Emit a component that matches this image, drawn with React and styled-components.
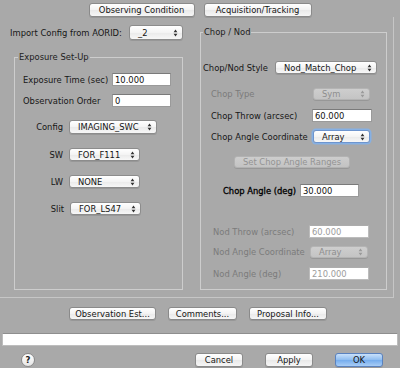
import React from "react";
import styled, { createGlobalStyle } from "styled-components";

const Global = createGlobalStyle`
  html, body { margin: 0; padding: 0; background: #a9a9a9; }
  #root { width: 400px; height: 368px; overflow: hidden; }
`;

const Window = styled.div`
  box-sizing: border-box;
  width: 400px;
  height: 368px;
  padding-top: 3px;
  background: #a9a9a9;
  font-family: "DejaVu Sans", "Liberation Sans", sans-serif;
  font-size: 8.4px;
  line-height: 10px;
  color: #161616;
  display: flex;
  flex-direction: column;
`;

const TabBar = styled.div`
  display: flex;
  justify-content: center;
  gap: 9px;
  height: 14px;
`;

const Button = styled.div`
  box-sizing: border-box;
  width: ${(p) => p.$w}px;
  height: ${(p) => p.$h || 14}px;
  display: flex;
  align-items: center;
  justify-content: center;
  border-radius: 3px;
  border: 1px solid ${(p) => (p.$primary ? "#5a82bf" : p.$disabled ? "#b2b2b2" : "#8a8a8a")};
  background: ${(p) =>
    p.$primary
      ? "linear-gradient(#c9e1fb, #8dbcf0 50%, #74acee 51%, #a8cdf6)"
      : p.$disabled
      ? "linear-gradient(#cdcdcd, #c3c3c3)"
      : "linear-gradient(#ffffff, #f3f3f3 50%, #e9e9e9 51%, #f6f6f6)"};
  color: ${(p) => (p.$disabled ? "#939393" : "#151515")};
  box-shadow: 0 1px 0 rgba(0, 0, 0, 0.1);
  white-space: nowrap;
`;

const Panel = styled.div`
  box-sizing: border-box;
  width: 394px;
  height: 281px;
  border-right: 1px solid #c6c6c6;
  border-bottom: 1px solid #c6c6c6;
  display: flex;
  align-items: flex-start;
`;

const LeftCol = styled.div`
  width: 173px;
  margin-left: 10px;
  padding-top: 8px;
  display: flex;
  flex-direction: column;
`;

const ImportRow = styled.div`
  display: flex;
  align-items: center;
  height: 15px;
  justify-content: space-between;
`;

const GroupBox = styled.div`
  box-sizing: border-box;
  width: ${(p) => p.$w}px;
  height: ${(p) => p.$h}px;
  margin-top: ${(p) => p.$mt}px;
  margin-left: ${(p) => p.$ml}px;
  border: 1px solid #cdcdcd;
  display: flex;
  flex-direction: column;
`;

const GroupTitle = styled.div`
  align-self: flex-start;
  margin-top: -6px;
  margin-left: ${(p) => p.$ml}px;
  padding: 0 1px;
  height: 10px;
  background: #a9a9a9;
  color: #1c1c1c;
`;

const Row = styled.div`
  display: flex;
  align-items: center;
  height: ${(p) => p.$h || 13}px;
  margin-top: ${(p) => p.$mt}px;
  padding-left: ${(p) => p.$pl || 0}px;
`;

const Label = styled.span`
  box-sizing: border-box;
  width: ${(p) => p.$w}px;
  flex: none;
  text-align: ${(p) => (p.$right ? "right" : "left")};
  padding-right: ${(p) => (p.$right ? 6 : 0)}px;
  color: ${(p) => (p.$disabled ? "#7b7b7b" : p.$bold ? "#000" : "#161616")};
  -webkit-text-stroke: ${(p) => (p.$bold ? "0.3px #000" : "0")};
  white-space: nowrap;
`;

const Field = styled.div`
  box-sizing: border-box;
  width: ${(p) => p.$w}px;
  height: ${(p) => p.$h || 13}px;
  padding-left: 2px;
  display: flex;
  align-items: center;
  background: #ffffff;
  border: 1px solid ${(p) => (p.$disabled ? "#bcbcbc" : "#9a9a9a")};
  border-top-color: ${(p) => (p.$disabled ? "#acacac" : "#7a7a7a")};
  color: ${(p) => (p.$disabled ? "#9c9c9c" : "#111")};
`;

const PopupBox = styled.div`
  box-sizing: border-box;
  width: ${(p) => p.$w}px;
  height: ${(p) => p.$h || 13}px;
  padding: 0 4px 0 8px;
  display: flex;
  align-items: center;
  justify-content: space-between;
  border-radius: 3px;
  border: 1px solid ${(p) => (p.$focused ? "#6d95cf" : p.$disabled ? "#b4b4b4" : "#8c8c8c")};
  background: ${(p) =>
    p.$disabled
      ? "linear-gradient(#cecece, #c4c4c4)"
      : "linear-gradient(#ffffff, #f4f4f4 50%, #eaeaea 51%, #f7f7f7)"};
  color: ${(p) => (p.$disabled ? "#8e8e8e" : "#141414")};
  box-shadow: ${(p) =>
    p.$focused ? "0 0 0 1.5px #86b0e3" : "0 1px 0 rgba(0,0,0,0.1)"};
  white-space: nowrap;
`;

const Arrows = ({ color }) => (
  <svg width="5" height="8" viewBox="0 0 5 8">
    <path d="M0.6 3.3 L2.5 0.6 L4.4 3.3 Z M0.6 4.7 L2.5 7.4 L4.4 4.7 Z" fill={color} />
  </svg>
);

const Popup = ({ children, disabled, ...rest }) => (
  <PopupBox $disabled={disabled} {...rest}>
    <span>{children}</span>
    <Arrows color={disabled ? "#9a9a9a" : "#333"} />
  </PopupBox>
);

const RightCol = styled.div`
  margin-left: 17px;
  display: flex;
  flex-direction: column;
`;

const ActionRow = styled.div`
  display: flex;
  gap: 12px;
  height: 13px;
  margin-top: 9px;
  padding-left: 69px;
`;

const StatusField = styled.div`
  box-sizing: border-box;
  height: 13px;
  margin: 13px 2px 0 2px;
  background: #ffffff;
  border: 1px solid #bdbdbd;
  border-top-color: #8e8e8e;
`;

const FooterRow = styled.div`
  display: flex;
  align-items: center;
  height: 14px;
  margin-top: 7px;
  padding: 0 17px 0 21px;
`;

const HelpButton = styled.div`
  box-sizing: border-box;
  width: 14px;
  height: 14px;
  border-radius: 50%;
  border: 1px solid #8a8a8a;
  background: linear-gradient(#ffffff, #e6e6e6);
  display: flex;
  align-items: center;
  justify-content: center;
  font-weight: 700;
  font-size: 8.5px;
  color: #222;
  margin-right: auto;
`;

const DialogButtons = styled.div`
  display: flex;
  gap: 22px;
`;

export default function App() {
  return (
    <Window>
      <Global />
      <TabBar>
        <Button $w={106}>Observing Condition</Button>
        <Button $w={108}>Acquisition/Tracking</Button>
      </TabBar>
      <Panel>
        <LeftCol>
          <ImportRow>
            <span>Import Config from AORID:</span>
            <Popup $w={54} $h={15}>_2</Popup>
          </ImportRow>
          <GroupBox $w={169} $h={233} $mt={17} $ml={4}>
            <GroupTitle $ml={3}>Exposure Set-Up</GroupTitle>
            <Row $mt={11} $pl={8}>
              <Label $w={89}>Exposure Time (sec)</Label>
              <Field $w={59}>10.000</Field>
            </Row>
            <Row $mt={8} $pl={8}>
              <Label $w={89}>Observation Order</Label>
              <Field $w={59}>0</Field>
            </Row>
            <Row $mt={13} $h={14}>
              <Label $w={54} $right>Config</Label>
              <Popup $w={88} $h={14}>IMAGING_SWC</Popup>
            </Row>
            <Row $mt={14}>
              <Label $w={54} $right>SW</Label>
              <Popup $w={71}>FOR_F111</Popup>
            </Row>
            <Row $mt={14}>
              <Label $w={54} $right>LW</Label>
              <Popup $w={71}>NONE</Popup>
            </Row>
            <Row $mt={14}>
              <Label $w={55} $right>Slit</Label>
              <Popup $w={71}>FOR_LS47</Popup>
            </Row>
          </GroupBox>
        </LeftCol>
        <RightCol>
          <GroupBox $w={187} $h={258} $mt={15} $ml={0}>
            <GroupTitle $ml={2}>Chop / Nod</GroupTitle>
            <Row $mt={24} $pl={2}>
              <Label $w={72}>Chop/Nod Style</Label>
              <Popup $w={102}>Nod_Match_Chop</Popup>
            </Row>
            <Row $mt={14} $h={12} $pl={10}>
              <Label $w={102} $disabled>Chop Type</Label>
              <Popup $w={57} $h={12} disabled>Sym</Popup>
            </Row>
            <Row $mt={9} $pl={10}>
              <Label $w={101}>Chop Throw (arcsec)</Label>
              <Field $w={60}>60.000</Field>
            </Row>
            <Row $mt={8} $pl={10}>
              <Label $w={102}>Chop Angle Coordinate</Label>
              <Popup $w={57} $focused>Array</Popup>
            </Row>
            <Row $mt={13} $h={12} $pl={33}>
              <Button $w={116} $h={12} $disabled>Set Chop Angle Ranges</Button>
            </Row>
            <Row $mt={16} $pl={22}>
              <Label $w={77} $bold>Chop Angle (deg)</Label>
              <Field $w={59}>30.000</Field>
            </Row>
            <Row $mt={28} $pl={12}>
              <Label $w={96} $disabled>Nod Throw (arcsec)</Label>
              <Field $w={60} $disabled>60.000</Field>
            </Row>
            <Row $mt={8} $h={12} $pl={12}>
              <Label $w={97} $disabled>Nod Angle Coordinate</Label>
              <Popup $w={58} $h={12} disabled>Array</Popup>
            </Row>
            <Row $mt={9} $pl={12}>
              <Label $w={96} $disabled>Nod Angle (deg)</Label>
              <Field $w={60} $disabled>210.000</Field>
            </Row>
          </GroupBox>
        </RightCol>
      </Panel>
      <ActionRow>
        <Button $w={87} $h={13}>Observation Est...</Button>
        <Button $w={69} $h={13}>Comments...</Button>
        <Button $w={78} $h={13}>Proposal Info...</Button>
      </ActionRow>
      <StatusField />
      <FooterRow>
        <HelpButton>?</HelpButton>
        <DialogButtons>
          <Button $w={48}>Cancel</Button>
          <Button $w={48}>Apply</Button>
          <Button $w={48} $primary>OK</Button>
        </DialogButtons>
      </FooterRow>
    </Window>
  );
}
